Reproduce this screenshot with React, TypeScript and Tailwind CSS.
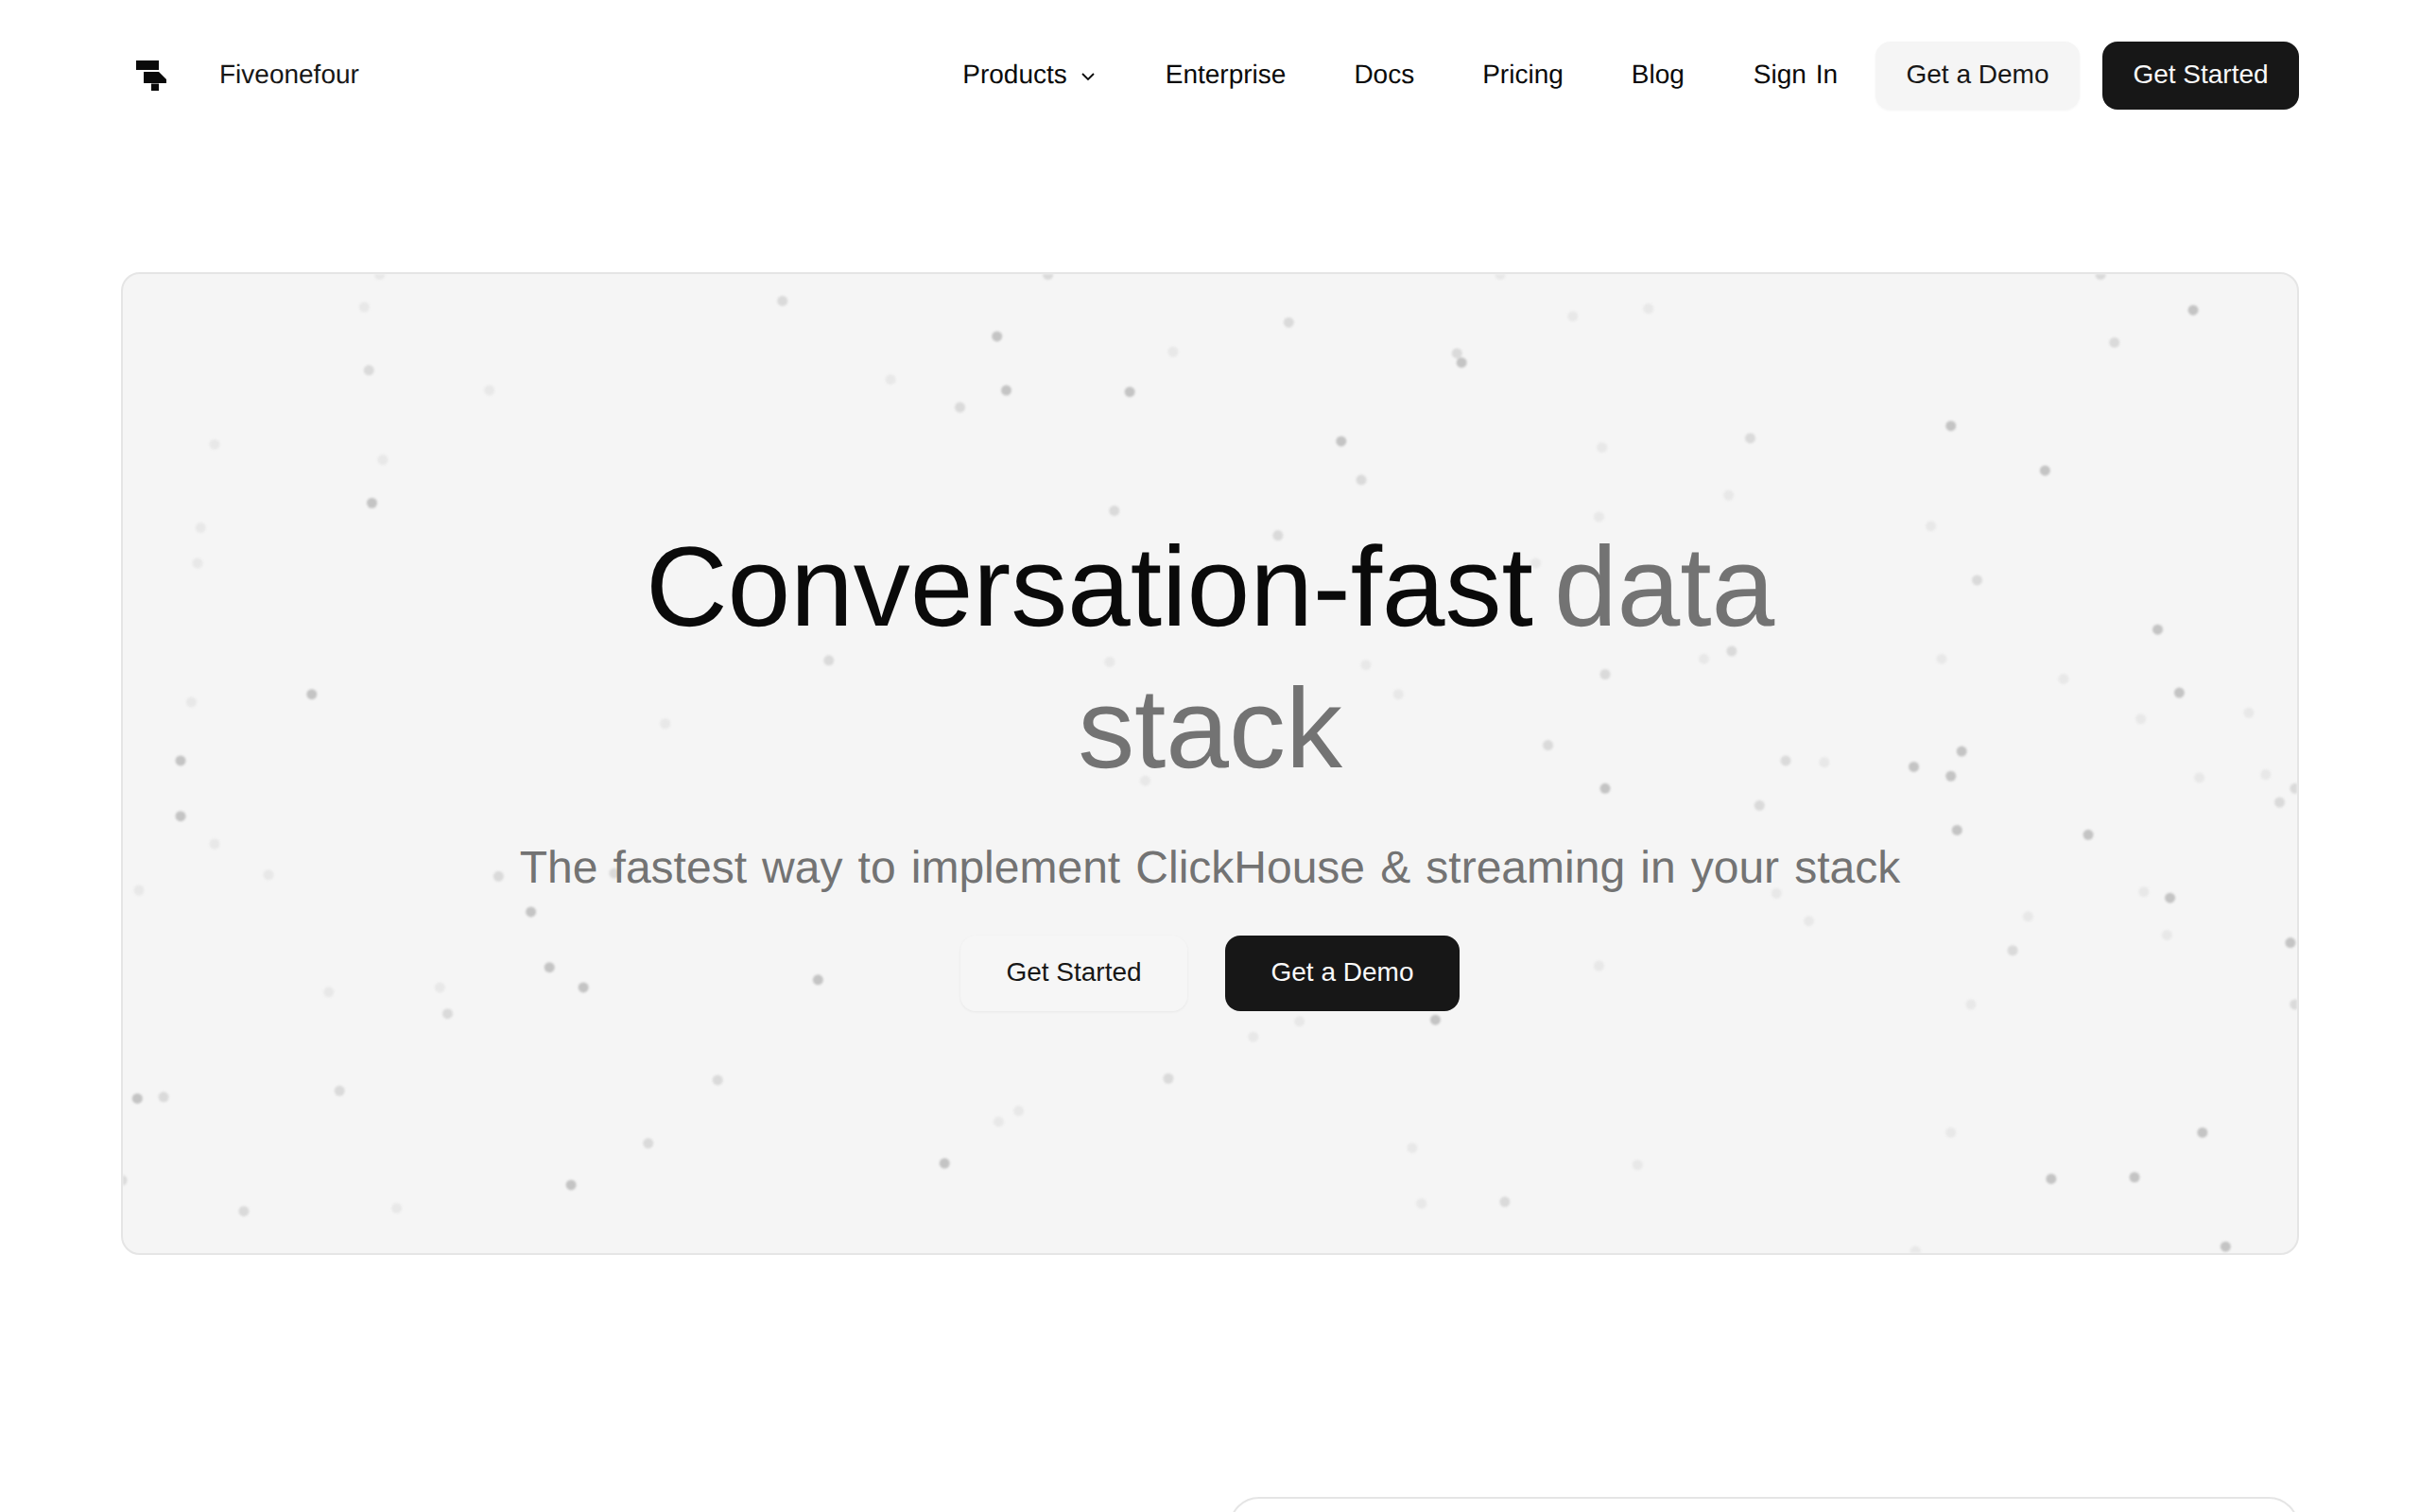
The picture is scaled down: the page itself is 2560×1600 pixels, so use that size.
const dots: [number, number, number][] = [
  [246,178,0],[236,199,0],[239,240,1],[317,253,0],[139,288,0],[248,298,0],[241,326,2],[130,342,0],[128,365,0],
  [202,450,2],[124,455,0],[117,493,2],[117,529,2],[139,547,0],[174,567,0],[90,577,0],[323,568,1],[398,566,1],
  [344,591,2],[356,627,2],[378,640,2],[285,640,0],[290,657,1],[213,643,0],[220,707,1],[106,711,1],[89,712,2],
  [465,700,1],[420,741,1],[370,768,2],[158,785,1],[257,783,0],[530,635,2],[612,754,2],[647,727,0],[660,720,0],
  [757,699,1],[812,672,0],[842,662,0],[930,661,2],[915,744,0],[921,780,0],[975,779,1],[1061,755,0],[1036,626,0],
  [1151,579,0],[1172,597,0],[1277,651,0],[1304,616,1],[1314,594,0],[1404,606,0],[1389,578,0],[1406,582,2],
  [1353,541,2],[1268,538,2],[1140,522,1],[1040,511,2],[1003,483,1],[1157,493,1],[1182,494,0],[1240,497,2],
  [1264,503,2],[1271,487,2],[1337,440,0],[1387,466,0],[1412,449,2],[1457,462,0],[1425,504,0],[1468,502,0],
  [1477,520,1],[1487,511,1],[1484,611,2],[1487,651,1],[1264,734,0],[1329,764,2],[1383,763,2],[1427,734,2],
  [1442,808,2],[1241,811,0],[1361,178,1],[1421,201,2],[1370,222,1],[1264,276,2],[1325,305,2],[1134,284,1],
  [1038,290,0],[1120,321,0],[1036,335,0],[1251,341,0],[1281,376,1],[1398,408,2],[1258,427,0],[1122,422,1],
  [1104,427,0],[1040,437,1],[885,431,0],[906,450,0],[742,506,0],[995,365,0],[947,235,2],[944,229,1],[1019,205,0],
  [1068,200,0],[972,178,0],[835,209,1],[760,228,0],[679,178,1],[646,218,2],[507,195,1],[577,246,0],[622,264,1],
  [652,253,2],[732,254,2],[869,286,2],[882,311,1],[722,331,1],[828,347,1],[431,469,0],[537,428,1],[719,429,0],[79,765,1],
]

const dotColors = ['#e8e8e8', '#dadada', '#c4c4c4']

function Logo() {
  return (
    <svg width="32" height="32" viewBox="0 0 32 32" fill="#0a0a0a">
      <path d="M0 0H24V10H0Z" />
      <path d="M8 12H24L32 20V24H8Z" />
      <path d="M16 24.5H24V32H16Z" />
    </svg>
  )
}

export default function App() {
  return (
    <div className="h-[1600px] overflow-hidden bg-white font-['Liberation_Sans',Arial,sans-serif] text-[#0a0a0a] antialiased [text-rendering:geometricPrecision]">
      <header className="flex h-[160px] items-center justify-between px-[128px]">
        <div className="flex items-center gap-[56px]">
          <div className="pl-[16px]">
            <Logo />
          </div>
          <span className="pb-[2px] text-[28px] text-[#171717]">Fiveonefour</span>
        </div>
        <nav className="flex items-center text-[28px] [word-spacing:2px]">
          <a className="flex items-center gap-[12px] px-[36px] pb-[2px]">
            Products
            <svg width="20" height="20" viewBox="0 0 20 20" fill="none" stroke="currentColor" strokeWidth="1.8" className="mt-[2px]">
              <path d="M4 8L10 14L16 8" />
            </svg>
          </a>
          <a className="px-[36px] pb-[2px]">Enterprise</a>
          <a className="px-[36px] pb-[2px]">Docs</a>
          <a className="px-[36px] pb-[2px]">Pricing</a>
          <a className="px-[36px] pb-[2px]">Blog</a>
          <a className="pb-[2px] pl-[37px] pr-[40px]">Sign In</a>
          <button className="flex h-[72px] w-[216px] items-center justify-center rounded-[16px] bg-[#f5f5f5] pb-[2px] text-[#171717] shadow-[0_1px_3px_rgba(0,0,0,0.05)]">Get a Demo</button>
          <button className="ml-[24px] flex h-[72px] w-[208px] items-center justify-center rounded-[16px] bg-[#171717] pb-[2px] text-[#fafafa]">Get Started</button>
        </nav>
      </header>

      <main className="px-[128px] pt-[128px]">
        <section className="relative flex h-[1040px] flex-col items-center overflow-hidden rounded-[20px] border-2 border-[#e5e5e5] bg-[#f5f5f5] pt-[256px]">
          <svg className="absolute inset-0 h-full w-full blur-[1px]">
            {dots.map(([x, y, level], i) => (
              <circle key={i} cx={x * 1.6327 - 130} cy={y * 1.6327 - 290} r="5.5" fill={dotColors[level]} />
            ))}
          </svg>
          <h1 className="relative w-[1400px] text-center text-[120px] leading-[150px] tracking-[-0.1px] [word-spacing:-11px]">
            Conversation-fast <span className="text-[#737373]">data stack</span>
          </h1>
          <p className="relative mt-[37px] text-[48px] leading-[72px] text-[#737373] [word-spacing:2.8px]">
            The fastest way to implement ClickHouse &amp; streaming in your stack
          </p>
          <div className="relative mt-[35px] flex gap-[40px] text-[28px] [word-spacing:1px]">
            <button className="flex h-[80px] w-[240px] items-center justify-center rounded-[16px] bg-[#f6f6f6] pb-[2px] text-[#171717] shadow-[0_1px_3px_rgba(0,0,0,0.06)]">Get Started</button>
            <button className="flex h-[80px] w-[248px] items-center justify-center rounded-[16px] bg-[#171717] pb-[2px] text-[#fafafa]">Get a Demo</button>
          </div>
        </section>
        <div className="ml-[1172px] mt-[256px] h-[200px] rounded-[32px] border-2 border-[#e5e5e5] bg-white" />
      </main>
    </div>
  )
}
